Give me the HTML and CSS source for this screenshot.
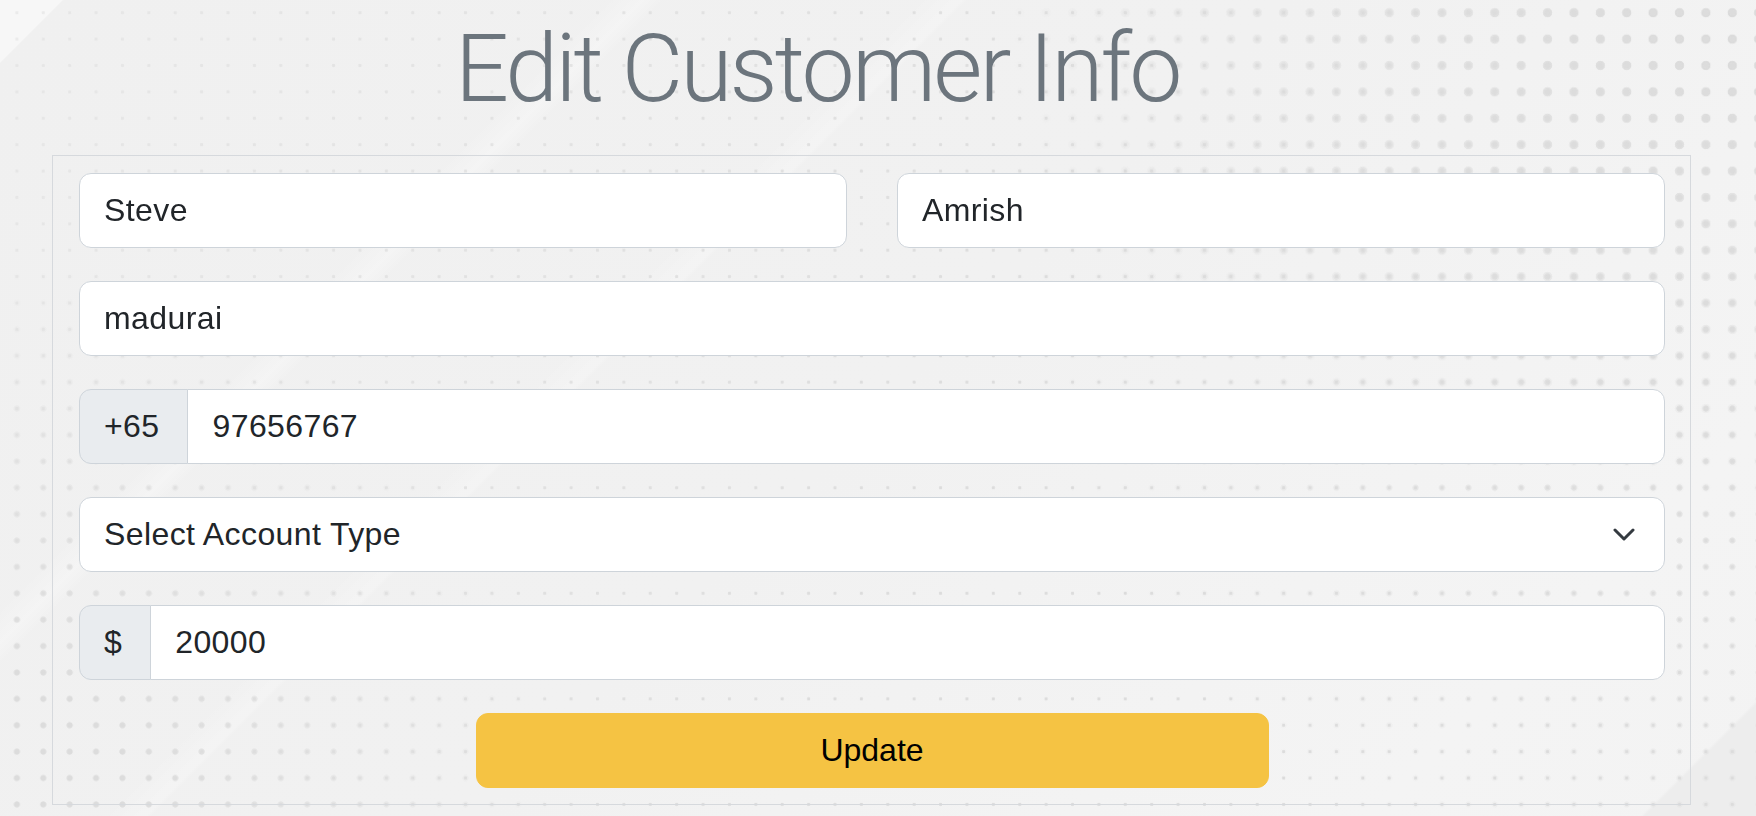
FILE: index.html
```html
<!DOCTYPE html>
<html lang="en">
<head>
<meta charset="utf-8">
<title>Edit Customer Info</title>
<link rel="stylesheet" href="styles.css">
</head>
<body>
<main class="page">
  <h1 class="title">Edit Customer Info</h1>
  <form class="card">
    <div class="row row-two">
      <input class="field" type="text" value="Steve">
      <input class="field" type="text" value="Amrish">
    </div>
    <div class="row">
      <input class="field" type="text" value="madurai">
    </div>
    <div class="row input-group">
      <span class="addon">+65</span>
      <input class="field field-grouped" type="text" value="97656767">
    </div>
    <div class="row">
      <div class="select">
        <span>Select Account Type</span>
        <svg class="chevron" width="22" height="14" viewBox="0 0 22 14" aria-hidden="true">
          <polyline points="2,2 11,11 20,2" fill="none" stroke="#343a40" stroke-width="3" stroke-linecap="round" stroke-linejoin="round"/>
        </svg>
      </div>
    </div>
    <div class="row input-group">
      <span class="addon">$</span>
      <input class="field field-grouped" type="text" value="20000">
    </div>
    <div class="row row-btn">
      <button class="btn" type="button">Update</button>
    </div>
  </form>
</main>
</body>
</html>
```
FILE: styles.css
```css
html {
  min-height: 100%;
  background:
    linear-gradient(135deg, #f7f7f7 0, #f7f7f7 44px, transparent 45px),
    linear-gradient(135deg, transparent 0, transparent 430px, rgba(255,255,255,0.28) 455px, rgba(255,255,255,0) 470px),
    linear-gradient(135deg, transparent 0, transparent 650px, rgba(255,255,255,0.25) 680px, rgba(255,255,255,0) 684px),
    linear-gradient(135deg, transparent 0, transparent 1737px, #ededed 1740px),
    linear-gradient(135deg, #f0f0f0 0, #f1f1f1 50%, #f4f4f4 85%, #f3f3f3 100%);
  background-color: #f1f1f1;
}

body {
  margin: 0;
  font-family: "Liberation Sans", Arial, sans-serif;
  color: #212529;
  background: transparent;
}

html::before,
html::after,
body::before {
  content: "";
  position: fixed;
  inset: 0;
  z-index: -1;
  pointer-events: none;
  background-size: 26.4px 26.4px;
  background-position: 3.7px -0.5px;
}

/* small dots everywhere, fainter toward the top-left */
html::before {
  background-image: radial-gradient(circle, #dcdcdc 0, #dcdcdc 1.3px, rgba(220,220,220,0) 2px);
  -webkit-mask-image: linear-gradient(120deg, rgba(0,0,0,0.45) 0%, rgba(0,0,0,0.75) 30%, #000 55%);
  mask-image: linear-gradient(120deg, rgba(0,0,0,0.45) 0%, rgba(0,0,0,0.75) 30%, #000 55%);
}

/* medium dots: bottom-left and right side */
html::after {
  background-image: radial-gradient(circle, #dcdcdc 0, #dcdcdc 2.7px, rgba(220,220,220,0) 3.4px);
  -webkit-mask-image:
    radial-gradient(ellipse 560px 560px at 0% 100%, #000 25%, transparent 100%),
    radial-gradient(ellipse 760px 800px at 100% 20%, #000 30%, transparent 100%);
  mask-image:
    radial-gradient(ellipse 560px 560px at 0% 100%, #000 25%, transparent 100%),
    radial-gradient(ellipse 760px 800px at 100% 20%, #000 30%, transparent 100%);
}

/* large dots: top right */
body::before {
  background-image: radial-gradient(circle, #dbdbdb 0, #dbdbdb 4.3px, rgba(219,219,219,0) 5px);
  -webkit-mask-image: radial-gradient(ellipse 760px 520px at 100% 0%, #000 15%, transparent 100%);
  mask-image: radial-gradient(ellipse 760px 520px at 100% 0%, #000 15%, transparent 100%);
}

.page {
  padding-top: 13px;
}

.title {
  margin: 0;
  padding-left: 455px;
  font-family: Roboto, "Liberation Sans", sans-serif;
  font-weight: 300;
  font-size: 95px;
  line-height: 112px;
  color: #6c757d;
  letter-spacing: -2.9px;
}

.card {
  box-sizing: border-box;
  width: 1639px;
  margin: 30px 0 0 52px;
  padding: 17px 25px 16px 26px;
  border: 1px solid #d6d9dd;
  display: flex;
  flex-direction: column;
  gap: 33px;
}

.row {
  display: flex;
}

.row-two {
  display: grid;
  grid-template-columns: 1fr 1fr;
  column-gap: 50px;
}

.field {
  box-sizing: border-box;
  flex: 1;
  min-width: 0;
  width: 100%;
  height: 75px;
  margin: 0;
  padding: 0 24px;
  font-family: inherit;
  font-size: 32px;
  letter-spacing: 0.4px;
  color: #212529;
  background: #fff;
  border: 1px solid #ced4da;
  border-radius: 12px;
  outline: none;
}

.input-group .addon {
  box-sizing: border-box;
  height: 75px;
  display: flex;
  align-items: center;
  padding: 0 28px 0 24px;
  font-size: 32px;
  letter-spacing: 0.4px;
  color: #212529;
  background: #e9ecef;
  border: 1px solid #ced4da;
  border-radius: 12px 0 0 12px;
}

.field-grouped {
  margin-left: -1px;
  border-radius: 0 12px 12px 0;
}

.select {
  box-sizing: border-box;
  flex: 1;
  height: 75px;
  display: flex;
  align-items: center;
  justify-content: space-between;
  padding: 0 29px 0 24px;
  font-size: 32px;
  letter-spacing: 0.4px;
  color: #212529;
  background: #fff;
  border: 1px solid #ced4da;
  border-radius: 12px;
}

.chevron {
  display: block;
  flex: none;
}

.row-btn {
  justify-content: center;
}

.btn {
  width: 50%;
  height: 75px;
  font-family: inherit;
  font-size: 32px;
  color: #000;
  background: #f5c343;
  border: 1px solid #f5c343;
  border-radius: 12px;
  cursor: pointer;
}
```
